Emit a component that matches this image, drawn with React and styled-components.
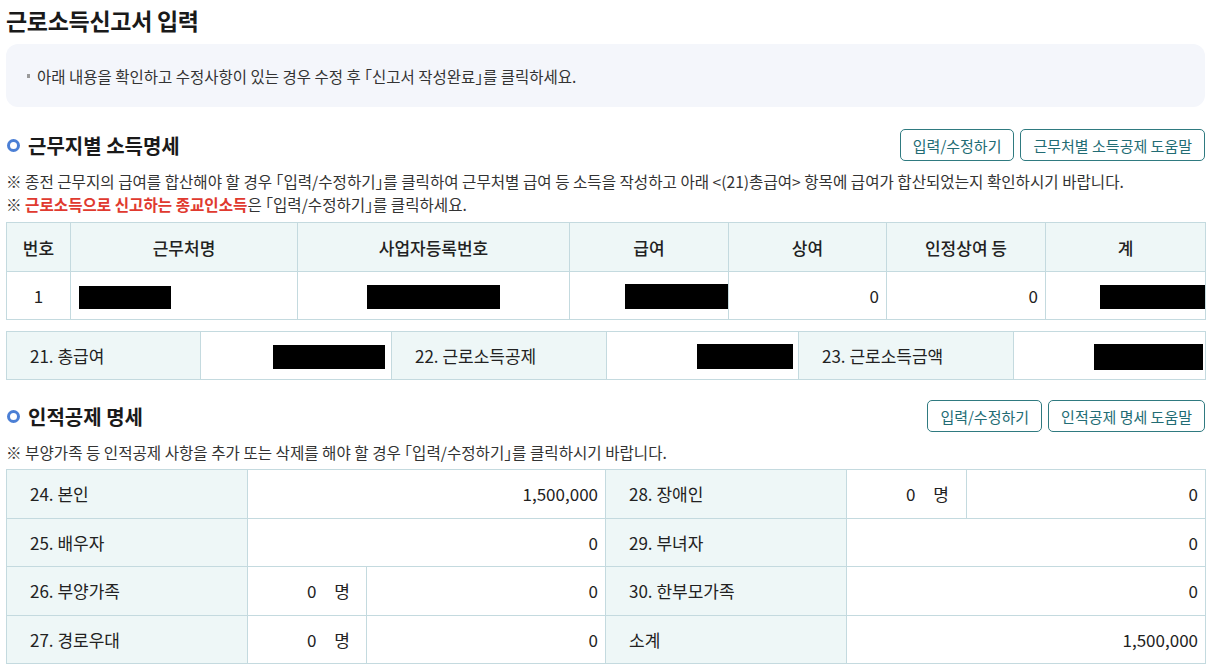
import React from "react";
import styled, { createGlobalStyle } from "styled-components";

const GlobalStyle = createGlobalStyle`
  body {
    margin: 0;
    background: #fff;
    font-family: "Noto Sans CJK KR", "Noto Sans", sans-serif;
    color: #222;
  }
`;

const Page = styled.div`
  width: 1199px;
  padding: 5px 3px 0 6px;
`;

const Title = styled.h1`
  margin: 0;
  font-size: 23px;
  line-height: 30px;
  font-weight: 700;
  color: #1a1a1a;
  letter-spacing: -0.3px;
`;

const Notice = styled.div`
  margin-top: 9px;
  height: 63px;
  border-radius: 12px;
  background: #f4f6fb;
  display: flex;
  align-items: center;
  padding-left: 21px;
  font-size: 15.5px;
  color: #333;
  gap: 7px;
  font-feature-settings: "halt";
`;

const Dot = styled.span`
  width: 3px;
  height: 4px;
  background: #9a9a9a;
`;

const SectionHead = styled.div`
  margin-top: ${(p) => p.$gap || 22}px;
  height: 32px;
  display: flex;
  align-items: center;
`;

const SectionTitle = styled.h2`
  margin: 0;
  flex: 1;
  display: flex;
  align-items: center;
  gap: 8px;
  font-size: 20px;
  font-weight: 700;
  color: #1a1a1a;
  &::before {
    content: "";
    width: 7px;
    height: 7px;
    margin-left: 1px;
    border: 3px solid #4b7fd5;
    border-radius: 50%;
  }
`;

const Buttons = styled.div`
  display: flex;
  gap: 6px;
`;

const Button = styled.button`
  height: 32px;
  padding: 0 12px;
  border: 1px solid #2f7a80;
  border-radius: 5px;
  background: #fff;
  color: #226c74;
  font-family: inherit;
  font-size: 15px;
  cursor: pointer;
`;

const Notes = styled.div`
  margin-top: 9px;
  font-size: 15.6px;
  line-height: 23px;
  color: #333;
  font-feature-settings: "halt";
`;

const Red = styled.strong`
  color: #e03a2f;
  font-weight: 700;
`;

const Table = styled.table`
  width: 1199px;
  margin-top: ${(p) => p.$gap || 5}px;
  border-collapse: collapse;
  table-layout: fixed;
  font-size: 17px;
  color: #222;
`;

const Row = styled.tr`
  height: ${(p) => p.$h || 48}px;
`;

const Th = styled.th`
  border: 1px solid #c4dadf;
  background: #eef7f7;
  font-weight: 500;
  text-align: center;
  padding: 0;
`;

const Td = styled.td`
  border: 1px solid #c4dadf;
  background: ${(p) => (p.$label ? "#eef7f7" : "#fff")};
  text-align: ${(p) => p.$align || "right"};
  padding: ${(p) => (p.$label ? "0 0 0 23px" : `0 ${p.$pr ?? 7}px 0 ${p.$pl ?? 7}px`)};
  white-space: nowrap;
  overflow: hidden;
`;

const Count = styled.span`
  display: inline-flex;
  gap: 18px;
`;

const Redact = styled.span`
  display: inline-block;
  vertical-align: middle;
  width: ${(p) => p.$w}px;
  height: ${(p) => p.$h || 24}px;
  background: #000;
`;

const Cols = ({ widths }) => (
  <colgroup>
    {widths.map((w, i) => (
      <col key={i} style={{ width: w }} />
    ))}
  </colgroup>
);

const People = ({ n }) => (
  <Count>
    <span>{n}</span>
    <span>명</span>
  </Count>
);

export default function App() {
  return (
    <Page>
      <GlobalStyle />
      <Title>근로소득신고서 입력</Title>
      <Notice>
        <Dot />
        아래 내용을 확인하고 수정사항이 있는 경우 수정 후 「신고서 작성완료」를 클릭하세요.
      </Notice>

      <SectionHead>
        <SectionTitle>근무지별 소득명세</SectionTitle>
        <Buttons>
          <Button>입력/수정하기</Button>
          <Button>근무처별 소득공제 도움말</Button>
        </Buttons>
      </SectionHead>
      <Notes>
        <div>
          ※ 종전 근무지의 급여를 합산해야 할 경우 「입력/수정하기」를 클릭하여 근무처별 급여 등 소득을 작성하고 아래
          &lt;(21)총급여&gt; 항목에 급여가 합산되었는지 확인하시기 바랍니다.
        </div>
        <div>
          ※ <Red>근로소득으로 신고하는 종교인소득</Red>은 「입력/수정하기」를 클릭하세요.
        </div>
      </Notes>

      <Table $gap={6}>
        <Cols widths={[64, 227, 272, 159, 158, 159, 160]} />
        <thead>
          <Row $h={49}>
            <Th>번호</Th>
            <Th>근무처명</Th>
            <Th>사업자등록번호</Th>
            <Th>급여</Th>
            <Th>상여</Th>
            <Th>인정상여 등</Th>
            <Th>계</Th>
          </Row>
        </thead>
        <tbody>
          <Row>
            <Td $align="center" $pl={0} $pr={0}>1</Td>
            <Td $align="left" $pl={8}>
              <Redact $w={92} $h={23} />
            </Td>
            <Td $align="center">
              <Redact $w={133} />
            </Td>
            <Td $pr={0}>
              <Redact $w={103} $h={25} />
            </Td>
            <Td>0</Td>
            <Td>0</Td>
            <Td $pr={0}>
              <Redact $w={105} />
            </Td>
          </Row>
        </tbody>
      </Table>

      <Table $gap={11}>
        <Cols widths={[194, 191, 215, 192, 215, 192]} />
        <tbody>
          <Row>
            <Td $label $align="left">21. 총급여</Td>
            <Td $pr={6}>
              <Redact $w={112} />
            </Td>
            <Td $label $align="left">22. 근로소득공제</Td>
            <Td $pr={5}>
              <Redact $w={96} $h={25} />
            </Td>
            <Td $label $align="left">23. 근로소득금액</Td>
            <Td $pr={2}>
              <Redact $w={109} $h={26} />
            </Td>
          </Row>
        </tbody>
      </Table>

      <SectionHead $gap={20}>
        <SectionTitle>인적공제 명세</SectionTitle>
        <Buttons>
          <Button>입력/수정하기</Button>
          <Button>인적공제 명세 도움말</Button>
        </Buttons>
      </SectionHead>
      <Notes>
        <div>※ 부양가족 등 인적공제 사항을 추가 또는 삭제를 해야 할 경우 「입력/수정하기」를 클릭하시기 바랍니다.</div>
      </Notes>

      <Table $gap={5}>
        <Cols widths={[241, 119, 239, 241, 120, 239]} />
        <tbody>
          <Row $h={48.5}>
            <Td $label $align="left">24. 본인</Td>
            <Td colSpan={2}>1,500,000</Td>
            <Td $label $align="left">28. 장애인</Td>
            <Td $pr={17}><People n={0} /></Td>
            <Td>0</Td>
          </Row>
          <Row $h={48.5}>
            <Td $label $align="left">25. 배우자</Td>
            <Td colSpan={2}>0</Td>
            <Td $label $align="left">29. 부녀자</Td>
            <Td colSpan={2}>0</Td>
          </Row>
          <Row $h={48.5}>
            <Td $label $align="left">26. 부양가족</Td>
            <Td $pr={16}><People n={0} /></Td>
            <Td>0</Td>
            <Td $label $align="left">30. 한부모가족</Td>
            <Td colSpan={2}>0</Td>
          </Row>
          <Row $h={48.5}>
            <Td $label $align="left">27. 경로우대</Td>
            <Td $pr={16}><People n={0} /></Td>
            <Td>0</Td>
            <Td $label $align="left">소계</Td>
            <Td colSpan={2}>1,500,000</Td>
          </Row>
        </tbody>
      </Table>
    </Page>
  );
}
